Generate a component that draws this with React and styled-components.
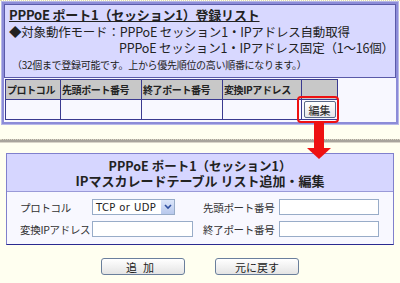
import React from "react";
import styled, { createGlobalStyle } from "styled-components";

const Global = createGlobalStyle`
  html, body { margin: 0; padding: 0; }
  body {
    background: #fffff0;
    font-family: "Noto Sans CJK JP", "DejaVu Sans", sans-serif;
    color: #222;
    width: 400px;
    height: 283px;
    overflow: hidden;
  }
`;

const Page = styled.div`
  position: relative;
  width: 400px;
  height: 283px;
  border-top: 1px dotted #e0dcb0;
  box-sizing: border-box;
  padding-top: 1px;
`;

const ListPanel = styled.section`
  margin: 0 2px;
  border: 2px solid #8c8cd8;
  outline: 1px solid #b8b8e8;
  box-shadow: inset 0 0 0 1px #5a5aa8;
  background: #d8d8ff;
`;

const Info = styled.div`
  padding: 2px 5px 5px 5px;
  font-size: 12.5px;
  letter-spacing: -0.2px;
`;

const Title = styled.div`
  font-weight: bold;
  text-decoration: underline;
  font-size: 13px;
  line-height: 17px;
  margin-bottom: 1px;
  white-space: nowrap;
`;

const InfoLine = styled.div`
  padding-left: ${(p) => p.$indent || 0}px;
  line-height: ${(p) => p.$lh || 15}px;
  white-space: nowrap;
`;

const Note = styled.div`
  font-size: 10px;
  line-height: 14px;
  padding-left: 3px;
  margin-top: 3px;
  white-space: nowrap;
  letter-spacing: -0.3px;
`;

const TableArea = styled.div`
  background: #f8f8ff;
  border-top: 1px solid #5a5aa8;
  padding: 1px 1px 2px 1px;
`;

const Grid = styled.table`
  border-collapse: collapse;
  border: 1px solid #6a6ab0;
  font-size: 10px;
  table-layout: fixed;
  width: 333px;
`;

const Th = styled.th`
  background: #c8c8c8;
  border: 1px solid #3a3a90;
  height: 19px;
  padding: 0 1px;
  font-weight: bold;
  white-space: nowrap;
  overflow: hidden;
  text-align: left;
  letter-spacing: -0.4px;
`;

const Td = styled.td`
  background: #f8f8ff;
  border: 1px solid #3a3a90;
  height: 19px;
  padding: 0;
  text-align: center;
  vertical-align: middle;
`;

const EditButton = styled.button`
  font-family: inherit;
  font-size: 11px;
  height: 17px;
  width: 32px;
  padding: 0;
  margin: 0 auto;
  border: 1px solid #5a6a88;
  border-radius: 2px;
  background: linear-gradient(#ffffff, #e6e6ea);
  color: #222;
  display: block;
`;

const Highlight = styled.div`
  position: absolute;
  left: 297px;
  top: 95px;
  width: 42px;
  height: 27px;
  border: 2px solid #ee1111;
  border-radius: 4px;
  box-sizing: border-box;
`;

const Arrow = styled.svg`
  position: absolute;
  left: 306px;
  top: 122px;
`;

const Separator = styled.div`
  margin-top: 15px;
  height: 2px;
  border-top: 1px dotted #d6d2c0;
  background: #a8a49c;
  border-bottom: 1px solid #d8d4c8;
`;

const EditPanel = styled.section`
  margin: 10px 6px 0 6px;
  border: 1px solid #8080cc;
  border-bottom: 1px solid #2a2a90;
  background: #f8f8ff;
`;

const EditHead = styled.div`
  background: #d6d6ff;
  border-bottom: 1px solid #9a9ad8;
  text-align: center;
  padding: 4px 0 3px 0;
  line-height: 15px;
`;

const HeadLine = styled.div`
  font-size: ${(p) => p.$size}px;
  font-weight: bold;
  white-space: nowrap;
`;

const Form = styled.div`
  display: grid;
  grid-template-columns: 72px 111px 76px 100px;
  row-gap: 6px;
  padding: 7px 0 7px 13px;
  align-items: center;
  font-size: 10.5px;
  color: #333;
`;

const Label = styled.span`
  white-space: nowrap;
  letter-spacing: -0.3px;
`;

const Field = styled.input`
  box-sizing: border-box;
  width: ${(p) => p.$w}px;
  height: 16px;
  border: 1px solid #98acc8;
  background: #fff;
  padding: 0;
  display: block;
`;

const Select = styled.div`
  box-sizing: border-box;
  width: 83px;
  height: 16px;
  border: 1px solid #98acc8;
  background: #fff;
  display: flex;
  align-items: center;
  justify-content: space-between;
  font-size: 10px;
  padding-left: 3px;
  font-family: "DejaVu Sans", sans-serif;
  letter-spacing: 0.4px;
  color: #222;
`;

const SelectBtn = styled.span`
  width: 13px;
  height: 14px;
  background: linear-gradient(#dce6fa, #b8c8ec);
  display: flex;
  align-items: center;
  justify-content: center;
`;

const Actions = styled.div`
  display: flex;
  justify-content: center;
  gap: 30px;
  margin-top: 13px;
`;

const Button = styled.button`
  font-family: inherit;
  width: 84px;
  height: 17px;
  font-size: 11px;
  padding: 0;
  border: 1px solid #6a7f9c;
  border-radius: 3px;
  background: linear-gradient(#ffffff, #e4e4e4);
  color: #222;
  letter-spacing: ${(p) => p.$ls || 0}px;
`;

export default function App() {
  return (
    <>
      <Global />
      <Page>
        <ListPanel>
          <Info>
            <Title>PPPoE ポート1（セッション1）登録リスト</Title>
            <InfoLine $lh={16}>◆対象動作モード：PPPoE セッション1・IPアドレス自動取得</InfoLine>
            <InfoLine $indent={110}>PPPoE セッション1・IPアドレス固定（1〜16個）</InfoLine>
            <Note>（32個まで登録可能です。上から優先順位の高い順番になります。）</Note>
          </Info>
          <TableArea>
            <Grid>
              <colgroup>
                <col style={{ width: 55 }} />
                <col style={{ width: 81 }} />
                <col style={{ width: 81 }} />
                <col style={{ width: 79 }} />
                <col style={{ width: 36 }} />
              </colgroup>
              <thead>
                <tr>
                  <Th>プロトコル</Th>
                  <Th>先頭ポート番号</Th>
                  <Th>終了ポート番号</Th>
                  <Th>変換IPアドレス</Th>
                  <Th></Th>
                </tr>
              </thead>
              <tbody>
                <tr>
                  <Td></Td>
                  <Td></Td>
                  <Td></Td>
                  <Td></Td>
                  <Td>
                    <EditButton>編集</EditButton>
                  </Td>
                </tr>
              </tbody>
            </Grid>
          </TableArea>
        </ListPanel>
        <Separator />
        <EditPanel>
          <EditHead>
            <HeadLine $size={12.5}>PPPoE ポート1（セッション1）</HeadLine>
            <HeadLine $size={13}>IPマスカレードテーブル リスト追加・編集</HeadLine>
          </EditHead>
          <Form>
            <Label>プロトコル</Label>
            <Select>
              TCP or UDP
              <SelectBtn>
                <svg width="8" height="6" viewBox="0 0 8 6">
                  <path d="M1 1 L4 4 L7 1" stroke="#3050a0" strokeWidth="1.6" fill="none" />
                </svg>
              </SelectBtn>
            </Select>
            <Label>先頭ポート番号</Label>
            <Field $w={100} />
            <Label>変換IPアドレス</Label>
            <Field $w={101} />
            <Label>終了ポート番号</Label>
            <Field $w={100} />
          </Form>
        </EditPanel>
        <Actions>
          <Button $ls={6}>追加</Button>
          <Button>元に戻す</Button>
        </Actions>
        <Highlight />
        <Arrow width="26" height="37" viewBox="0 0 26 37">
          <rect x="8" y="0" width="10" height="26" fill="#ee1111" />
          <polygon points="1,25 25,25 13,36" fill="#ee1111" />
        </Arrow>
      </Page>
    </>
  );
}
